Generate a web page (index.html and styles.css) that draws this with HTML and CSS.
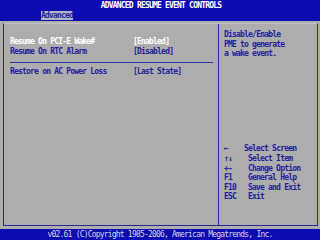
FILE: index.html
```html
<!DOCTYPE html>
<html lang="en">
<head>
  <meta charset="UTF-8" />
  <title>Advanced Resume Event Controls</title>
  <link rel="stylesheet" href="styles.css">
</head>
<body>
  <div class="bios">
    <div class="cabecera">
      <div class="titulo">ADVANCED RESUME EVENT CONTROLS</div>
      <div class="pestanas">
        <span class="pestana">Advanced</span>
      </div>
    </div>

    <div class="marco">
      <div class="caja">
        <div class="opciones">
          <div class="fila activa"><span class="nombre">Resume On PCI-E Wake#</span><span class="valor">[Enabled]</span></div>
          <div class="fila"><span class="nombre">Resume On RTC Alarm</span><span class="valor">[Disabled]</span></div>
          <div class="separador"></div>
          <div class="fila"><span class="nombre">Restore on AC Power Loss</span><span class="valor">[Last State]</span></div>
        </div>
        <div class="ayuda">
          <div class="texto-ayuda">
            <div>Disable/Enable</div>
            <div>PME to generate</div>
            <div>a wake event.</div>
          </div>
          <div class="teclas">
            <div class="tecla"><span class="clave">&larr;</span><span class="accion primera">Select Screen</span></div>
            <div class="tecla"><span class="clave">&uarr;&darr;</span><span class="accion">Select Item</span></div>
            <div class="tecla"><span class="clave">+-</span><span class="accion">Change Option</span></div>
            <div class="tecla"><span class="clave">F1</span><span class="accion">General Help</span></div>
            <div class="tecla"><span class="clave">F10</span><span class="accion">Save and Exit</span></div>
            <div class="tecla"><span class="clave">ESC</span><span class="accion">Exit</span></div>
          </div>
        </div>
      </div>
    </div>

    <div class="pie">v02.61 (C)Copyright 1985-2006, American Megatrends, Inc.</div>
  </div>
</body>
</html>
```

FILE: styles.css
```css
body {
  margin: 0;
  background-color: #adadad;
  font-family: 'DejaVu Sans Mono', 'Liberation Mono', monospace;
  font-weight: bold;
  font-size: 8px;
  letter-spacing: -0.8px;
  color: #22229c;
}

.bios {
  width: 320px;
  height: 240px;
  display: flex;
  flex-direction: column;
  overflow: hidden;
}

.cabecera {
  height: 21px;
  background-color: #0c0cb2;
}

.titulo {
  height: 11px;
  line-height: 11px;
  text-align: center;
  color: #ffffff;
  padding-left: 2px;
}

.pestanas {
  padding-left: 41px;
  height: 10px;
}

.pestana {
  display: inline-block;
  width: 32px;
  height: 9px;
  line-height: 9px;
  background-color: #b4b4c4;
  color: #1c1ca0;
}

.marco {
  flex: 1;
  padding: 2px 2px 3px 3px;
}

.caja {
  height: 100%;
  box-sizing: border-box;
  border: 1px solid #2a2a8e;
  border-top-color: #c4c4c4;
  display: grid;
  grid-template-columns: 215px 1fr;
}

.opciones {
  padding: 13px 5px 0 6px;
  border-right: 1px solid #2a2a8e;
}

.fila {
  display: flex;
  height: 9.5px;
  line-height: 9.5px;
}

.fila .nombre {
  width: 123px;
}

.activa {
  color: #ffffff;
}

.separador {
  height: 1px;
  background-color: #3434a2;
  margin: 6px 0 4px 0;
}

.ayuda {
  display: flex;
  flex-direction: column;
  justify-content: space-between;
  padding: 6px 0 23px 5px;
  line-height: 9.6px;
}

.tecla {
  display: flex;
}

.clave {
  width: 24px;
}

.accion.primera {
  margin-left: -4px;
}

.pie {
  height: 11px;
  line-height: 11px;
  background-color: #0c0cb2;
  color: #d4d4e8;
  text-align: center;
  font-weight: normal;
}
```
